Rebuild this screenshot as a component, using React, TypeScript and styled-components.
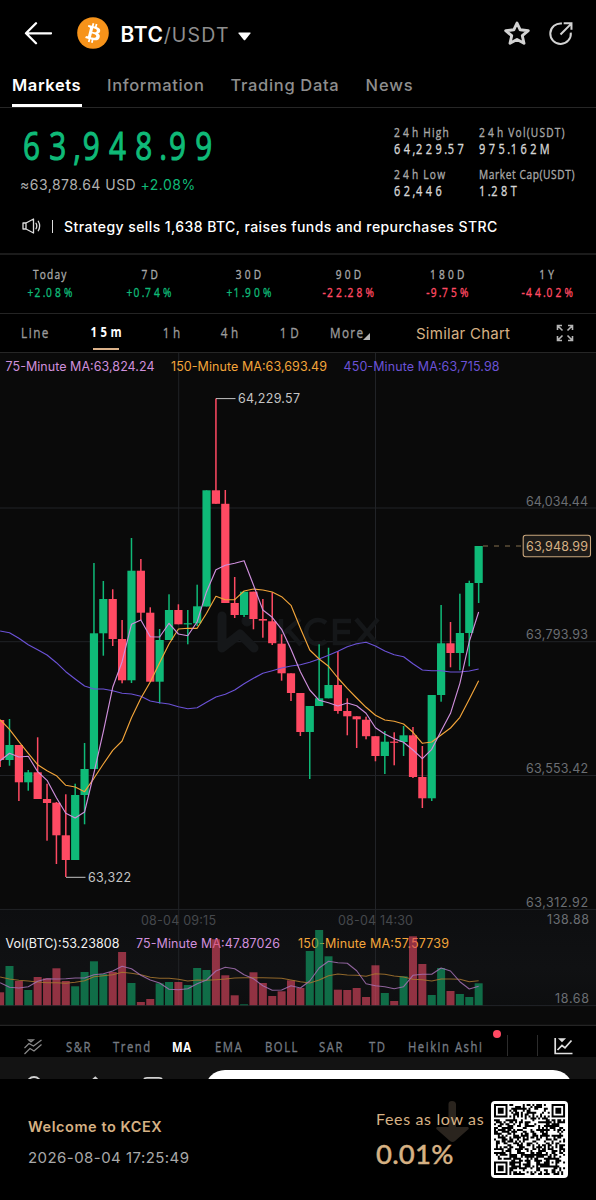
import React from 'react';
import styled, { createGlobalStyle } from 'styled-components';

const SANS = `Inter, "Noto Sans", sans-serif`;
const NARROW = `"Open Sans", "Noto Sans", sans-serif`;
const UP = '#0fba78';
const DOWN = '#ff4a63';
const GOLD = '#d6b184';
const PINK = '#cf8fdc';
const ORANGE = '#f3a53a';
const VIOLET = '#6b52d6';

const Global = createGlobalStyle`
  * { box-sizing: border-box; }
  body { margin: 0; background: #000; }
`;

const Screen = styled.div`
  width: 596px;
  height: 1200px;
  display: flex;
  flex-direction: column;
  background: #000;
  color: #fff;
  font-family: ${SANS};
  overflow: hidden;
  white-space: nowrap;
`;

/* ---------- condensed figures ---------- */

type NarrowProps = { $size: number; $color?: string; $bold?: boolean; $track?: number; $center?: boolean };
const Narrow = styled.span<NarrowProps>`
  display: block;
  font-family: ${NARROW};
  font-size: ${(p) => p.$size}px;
  line-height: 1.15;
  color: ${(p) => p.$color ?? '#a8a8a8'};
  font-weight: ${(p) => (p.$bold ? 700 : 400)};
  letter-spacing: ${(p) => p.$track ?? 0.12}em;
  -webkit-text-stroke: ${(p) => (p.$bold ? '0' : p.$size > 30 ? '1.1px' : '0.35px')};
  transform: scaleX(0.78);
  transform-origin: ${(p) => (p.$center ? '50%' : '0')} 50%;
`;
const Digits = styled.span`
  letter-spacing: 0.316em;
`;
const Mark = styled.span`
  letter-spacing: 0.06em;
  margin-left: -0.08em;
`;

type CondensedProps = { children: string; size: number; color?: string; bold?: boolean; track?: number; center?: boolean };
const Condensed = ({ children, size, color, bold, track, center }: CondensedProps) => (
  <Narrow $size={size} $color={color} $bold={bold} $track={track} $center={center}>
    {children.split(/(\d+|[.,])/).map((part, i) => {
      if (/^\d/.test(part)) return <Digits key={i}>{part}</Digits>;
      if (/^[.,]$/.test(part)) return <Mark key={i}>{part}</Mark>;
      return part;
    })}
  </Narrow>
);

/* ---------- header ---------- */

const Header = styled.header`
  height: 66px;
  flex: none;
  display: flex;
  align-items: center;
  padding: 0 23px 0 24px;
`;
const Coin = styled.svg`
  margin-left: 25px;
`;
const Pair = styled.h1`
  margin: 3px 0 0 11.5px;
  font-size: 21px;
  line-height: 26px;
  font-weight: 600;
  letter-spacing: 0.6px;
  span {
    color: #8e8e8e;
    font-size: 19.5px;
    font-weight: 400;
    letter-spacing: 1.2px;
  }
`;
const Caret = styled.svg`
  margin: 7px 0 0 8px;
`;
const HeaderActions = styled.div`
  margin-left: auto;
  display: flex;
  align-items: center;
  gap: 17px;
`;

const Tabs = styled.nav`
  height: 42px;
  flex: none;
  display: flex;
  gap: 25.5px;
  padding: 0 12px;
  border-bottom: 1px solid #262626;
`;
const Tab = styled.a<{ $active?: boolean; $width: number; $track: number }>`
  width: ${(p) => p.$width}px;
  height: 41px;
  line-height: 38px;
  font-size: 16.5px;
  letter-spacing: ${(p) => p.$track}px;
  font-weight: ${(p) => (p.$active ? 600 : 500)};
  color: ${(p) => (p.$active ? '#fff' : '#8e8e8e')};
  border-bottom: ${(p) => (p.$active ? '3px solid #fff' : 'none')};
`;

/* ---------- price summary ---------- */

const Summary = styled.section`
  height: 98px;
  flex: none;
  display: flex;
  padding: 0 16px 0 20px;
`;
const PriceBlock = styled.div`
  width: 374px;
  flex: none;
  padding-top: 16px;
  display: flex;
  flex-direction: column;
`;
const PriceValue = styled.div`
  padding-left: 3px;
  height: 49px;
`;
const Converted = styled.div`
  height: 22px;
  line-height: 22px;
  margin-top: 1px;
  font-size: 14px;
  letter-spacing: 0.47px;
  color: #b0b0b0;
  span {
    color: ${UP};
  }
`;
const Stats = styled.div`
  flex: none;
  padding-top: 17px;
  display: grid;
  grid-template-columns: 85px 101px;
  grid-auto-rows: 42px;
`;
const Stat = styled.div`
  display: flex;
  flex-direction: column;
  gap: 1px;
`;
const Notice = styled.div`
  height: 49px;
  flex: none;
  display: flex;
  align-items: center;
  padding: 0 22px 7px;
  font-size: 14px;
  font-weight: 500;
  letter-spacing: 0.42px;
  border-bottom: 2px solid #1b1b1b;
`;
const NoticeBar = styled.i`
  width: 1px;
  height: 13px;
  margin: 0 11px 0 11px;
  background: #ddd;
`;

const Performance = styled.section`
  height: 59px;
  flex: none;
  display: grid;
  grid-template-columns: repeat(6, 1fr);
  border-bottom: 1px solid #242424;
`;
const Period = styled.div`
  display: flex;
  flex-direction: column;
  align-items: center;
  padding-top: 12px;
  gap: 3px;
  padding-left: 2px;
`;

const Intervals = styled.nav`
  height: 39px;
  flex: none;
  display: grid;
  grid-template-columns: 71px 70px 63px 53px 66px 93px 94px 1fr;
  border-bottom: 1px solid #262626;
`;
const Interval = styled.a`
  display: flex;
  flex-direction: column;
  align-items: center;
  padding-top: 10px;
`;
const ActiveInterval = styled(Interval)`
  &::after {
    content: '';
    width: 26px;
    height: 2px;
    margin-top: 7px;
    background: #dbb28a;
  }
`;
const More = styled.a`
  display: flex;
  align-items: flex-start;
  padding: 10px 0 0 7px;
  svg {
    margin: 9px 0 0 -11px;
  }
`;
const Similar = styled.a`
  padding-top: 10px;
  line-height: 20px;
  font-size: 15px;
  letter-spacing: 0.25px;
  color: ${GOLD};
`;
const Expand = styled.a`
  padding: 10px 0 0 46px;
`;

/* ---------- chart ---------- */

const Chart = styled.svg`
  display: block;
  flex: none;
  font-family: ${SANS};
  font-size: 12.5px;
`;

type Candle = [up: 0 | 1, top: number, bottom: number, high: number, low: number];
const candles: Candle[] = [
  [0, 720, 760, 720, 767], [1, 745, 760, 719, 765.7], [0, 745, 782.3, 745, 801], [1, 772.3, 782.3, 770, 790.7],
  [0, 772.3, 799, 737.3, 799], [0, 799, 803, 783.7, 840.7], [0, 802.7, 835.3, 802, 864], [0, 835.3, 860, 794.3, 877],
  [1, 795, 860, 783.7, 860], [1, 769, 795, 743, 824.3], [1, 633.3, 769, 563, 769], [1, 599, 633.3, 581, 655.7],
  [0, 599, 639, 589.3, 646], [0, 639, 680.3, 620, 683.3], [1, 570.7, 680.3, 538, 683], [0, 570.7, 612.7, 559, 620],
  [0, 612.7, 681.7, 607.3, 681.7], [1, 640, 681.7, 629, 703.5], [1, 610, 640, 594.3, 640], [0, 610, 624.3, 604.3, 624.3],
  [1, 623.2, 624.4, 610, 644.3], [1, 606.3, 623.3, 584.7, 626], [1, 490.3, 606.5, 490.3, 606.5], [0, 490.3, 503.8, 398.5, 503.8],
  [0, 503.8, 603, 490, 603], [0, 603, 615, 577, 618], [1, 591.7, 615, 591.7, 617], [0, 591.7, 619, 591.7, 629.3],
  [0, 619, 620.6, 599, 637.7], [0, 621.3, 643.2, 592.3, 645], [0, 643.7, 673.3, 634.3, 680.7], [0, 673.3, 693, 673.3, 701],
  [0, 693, 732, 693, 736], [1, 706, 732, 706, 779], [1, 698.3, 706, 644.3, 706], [1, 685, 698.3, 647.7, 698.3],
  [0, 685, 711, 651, 713.7], [0, 711, 716.3, 698.3, 735.3], [0, 716.3, 719.3, 716.3, 748], [0, 719.7, 736.2, 716.7, 739.3],
  [0, 736.2, 756, 736, 761.3], [1, 741.7, 756, 731, 774], [0, 741.6, 742.8, 732.3, 765.3], [1, 735.3, 742, 726, 756],
  [0, 735.3, 777, 727, 778], [0, 777, 798.3, 746, 808], [1, 695, 798.3, 695, 801], [1, 643.3, 695, 605, 701.7],
  [0, 643.3, 653, 622, 667.3], [1, 633, 653, 593.7, 670.3], [1, 583, 633, 580.7, 666.3], [1, 546, 583, 546, 603],
];

const fastMa = [
  760.7, 753.3, 757, 756.3, 771.7, 780.3, 797.7, 813.3, 818, 812, 773, 731.7, 687.3, 661.7, 624.3, 620, 636.7, 637, 623.3,
  634, 635.7, 621.7, 591.7, 569.7, 565.3, 563.3, 560.7, 585, 610, 617.3, 629.3, 649.3, 671.7, 690, 700.3, 702.7, 706, 703,
  705.7, 713.3, 727.7, 734, 738.7, 742.3, 750, 758.7, 749.3, 731, 713.3, 683.3, 641.7, 612,
];
const midMa = [
  719.7, 729.3, 741.7, 753.3, 764.7, 770.7, 775.7, 785.3, 787, 791.7, 778.3, 764, 750.3, 741, 717.7, 698.3, 682, 662.7, 644,
  629, 628.3, 628.3, 613.3, 596.3, 599.7, 599.7, 591, 589, 590, 592, 596.7, 605.3, 628.3, 650, 659, 666.3, 678, 688.3, 698,
  707.3, 715.3, 720, 721.3, 724, 732.3, 743.3, 742, 735, 728, 717.3, 699.3, 680.7,
];
const slowMa = [
  631, 632.7, 638.3, 644.7, 649.7, 655, 662.7, 671.7, 679, 686, 689, 689, 690.7, 693.3, 694, 696.3, 701, 702.7, 704, 706.7,
  708.7, 707.7, 702.3, 697, 694.3, 690, 683.7, 678.3, 673.3, 670.7, 668, 666, 664.7, 662.3, 659, 655.3, 651.3, 646.7, 643.7,
  642.3, 646, 651, 654.7, 656.7, 663.7, 670, 670.7, 670.7, 672, 672, 671, 669,
];
const volumeTops = [
  992.3, 966, 981, 990, 977, 978.3, 968.3, 981, 986.3, 972, 961.3, 974, 972, 952, 983, 1002, 999, 983.3, 982, 982, 985, 968,
  970, 939.3, 975.3, 995.3, 1004.3, 972.3, 983, 996, 991.3, 980.3, 988, 951, 930, 956.3, 989.7, 990, 988, 997, 965.3, 993,
  1001, 976.3, 936.3, 964, 995, 968, 991, 994, 997, 983.3,
];
/* whether each volume bar is drawn in the rising colour */
const volumeUp = [
  0, 1, 0, 1, 0, 0, 0, 0, 1, 1, 1, 1, 0, 0, 1, 0, 0, 1, 1, 0, 1, 1, 1, 0, 0, 0, 1, 0, 0, 0, 0, 0, 0, 1, 1, 1, 0, 0, 0, 0, 0,
  1, 0, 1, 0, 0, 1, 1, 0, 1, 1, 1,
];
const volumeFast = [
  982.7, 987.3, 988, 986.7, 981.3, 978.7, 979, 978.7, 978, 978, 974.7, 973.7, 971, 966.3, 968.7, 975.3, 980, 983, 989.3,
  989.7, 988.7, 983.7, 980, 971, 967.3, 968.7, 974.7, 978.7, 985.7, 990.3, 990, 985.7, 988, 981, 968, 961.3, 962.7, 963.3,
  970.7, 983.7, 985.7, 986.7, 988.7, 986.7, 975.3, 974.3, 974.3, 968, 971, 981.7, 989, 986.3,
];
const volumeMid = [
  977, 979, 980.3, 981, 982, 982.7, 982.7, 983.3, 982.3, 980.7, 976.7, 975.7, 974.7, 972.3, 973.3, 974.7, 977.3, 978.3,
  978.3, 979.3, 981, 980, 980.3, 979.7, 979, 978, 977.7, 977.7, 977.7, 978, 978.3, 980, 981.7, 983, 980, 975.7, 974, 975,
  975.3, 976.3, 973.7, 974.3, 976, 977, 979.3, 979.7, 981, 979, 979, 979.3, 981.7, 980.7,
];

const cx = (i: number) => 0.12 + i * 9.383;
const line = (values: number[]) => values.map((y, i) => `${cx(i).toFixed(2)},${y}`).join(' ');

const ChartText = ({ x, y, w, fill, children }: { x: number; y: number; w: number; fill: string; children: string }) => (
  <text x={x} y={y} fill={fill} textLength={w}>
    {children}
  </text>
);

const PriceChart = () => (
  <Chart width="596" height="673" viewBox="0 353 596 673">
    <defs>
      <linearGradient id="volumeShade" x1="0" y1="0" x2="0" y2="1">
        <stop offset="0" stopColor="#0d0e10" />
        <stop offset="0.6" stopColor="#101113" />
        <stop offset="1" stopColor="#0d0e0f" />
      </linearGradient>
    </defs>
    <rect y="353" width="596" height="673" fill="#0a0a0a" />
    <rect y="909" width="596" height="97" fill="url(#volumeShade)" />
    <path d="M0 508H596M0 641.7H596M0 775.5H596M0 909.4H596M0 1005.6H596M178.7 353V1005M375.5 353V1005" stroke="#212327" fill="none" />
    <path d="M0 1025.3H596" stroke="#2b2b2b" />

    <g fill="#151719" stroke="#151719">
      <path d="M222 616V648L240 634L254 648" fill="none" strokeWidth="9" strokeLinecap="round" strokeLinejoin="round" />
      <circle cx="247" cy="621" r="5" />
      <g fill="none" strokeWidth="4.5">
        <path d="M281 619V645M300 619L283 634M288 630L301 645" />
        <path d="M326 623A12 12 0 1 0 326 641" />
        <path d="M351 621H335V643H351M335 632H350" />
        <path d="M356 619L378 645M378 619L356 645" />
      </g>
    </g>

    <ChartText x={5.5} y={370.5} w={149} fill={PINK}>75-Minute MA:63,824.24</ChartText>
    <ChartText x={171} y={370.5} w={156} fill={ORANGE}>150-Minute MA:63,693.49</ChartText>
    <ChartText x={343.5} y={370.5} w={156} fill={VIOLET}>450-Minute MA:63,715.98</ChartText>

    {candles.map(([up, top, bottom, high, low], i) => (
      <g key={i} fill={up ? UP : DOWN}>
        <rect x={cx(i) - 0.75} y={high} width="1.5" height={low - high} />
        <rect x={cx(i) - 4.1} y={top} width="8.2" height={bottom - top} />
      </g>
    ))}
    <g fill="none" strokeWidth="1.15" strokeLinejoin="round">
      <polyline points={line(slowMa)} stroke={VIOLET} />
      <polyline points={line(midMa)} stroke={ORANGE} />
      <polyline points={line(fastMa)} stroke={PINK} />
    </g>

    <path d="M216 398.6H235.5M66 877.3H85.5" stroke="#c4c4c4" />
    <ChartText x={238} y={403.3} w={62} fill="#c4c4c4">64,229.57</ChartText>
    <ChartText x={88} y={882} w={43} fill="#c4c4c4">63,322</ChartText>

    <g>
      <ChartText x={526} y={505.6} w={62} fill="#6b6e73">64,034.44</ChartText>
      <ChartText x={526} y={639.4} w={62} fill="#6b6e73">63,793.93</ChartText>
      <ChartText x={526} y={773.4} w={62} fill="#6b6e73">63,553.42</ChartText>
      <ChartText x={526} y={906.5} w={62} fill="#6b6e73">63,312.92</ChartText>
      <ChartText x={547} y={923.6} w={42} fill="#6b6e73">138.88</ChartText>
      <ChartText x={555} y={1002.5} w={34} fill="#6b6e73">18.68</ChartText>
      <ChartText x={141} y={924.8} w={75} fill="#45484c">08-04 09:15</ChartText>
      <ChartText x={338} y={924.8} w={75} fill="#45484c">08-04 14:30</ChartText>
    </g>

    <path d="M483 546H522" stroke="#85704f" strokeDasharray="5 6" />
    <rect x="523.2" y="535.2" width="67.3" height="21.6" rx="2.5" fill="#1d1b19" stroke="#c9a67c" strokeWidth="1.1" />
    <ChartText x={526} y={550.7} w={62} fill={GOLD}>63,948.99</ChartText>

    <ChartText x={5.5} y={948} w={114} fill="#f2f2f2">Vol(BTC):53.23808</ChartText>
    <ChartText x={136} y={948} w={144} fill={PINK}>75-Minute MA:47.87026</ChartText>
    <ChartText x={298} y={948} w={151} fill={ORANGE}>150-Minute MA:57.57739</ChartText>

    {volumeTops.map((top, i) => (
      <rect key={i} x={cx(i) - 4} y={top} width="8" height={1005.2 - top} fill={volumeUp[i] ? '#12a469' : '#e04760'} opacity="0.63" />
    ))}
    <g fill="none" strokeWidth="1.1" strokeLinejoin="round">
      <polyline points={line(volumeMid)} stroke="#a8772f" opacity="0.85" />
      <polyline points={line(volumeFast)} stroke="#a571b4" opacity="0.85" />
    </g>
  </Chart>
);

/* ---------- indicators ---------- */

const Indicators = styled.nav`
  position: relative;
  height: 31px;
  flex: none;
  display: flex;
  padding: 12px 0 0 24px;
`;
const Indicator = styled.a<{ $width: number }>`
  width: ${(p) => p.$width}px;
  height: 19px;
  margin-right: 22.5px;
  padding-top: 1px;
`;
const TrendIcon = styled.svg`
  margin: 1px 23.5px 0 0;
`;
const Dot = styled.i`
  position: absolute;
  left: 493px;
  top: 4px;
  width: 8px;
  height: 8px;
  border-radius: 50%;
  background: ${DOWN};
`;
const DrawTool = styled.a`
  width: 31px;
  height: 21px;
  margin: -3px 15.5px 0 0.5px;
  border: solid #2c2c2c;
  border-width: 0 1px;
`;

const BottomPeek = styled.div`
  height: 22px;
  flex: none;
  display: flex;
  overflow: hidden;
  background: #131313;
`;
const TradeButton = styled.div`
  width: 368px;
  height: 40px;
  margin: 13px 0 0 35px;
  border-radius: 20px;
  background: #fff;
`;

/* ---------- share footer ---------- */

const Footer = styled.footer`
  flex: 1;
  display: flex;
  padding: 0 28px;
`;
const Welcome = styled.div`
  width: 348px;
  padding-top: 38px;
  strong {
    display: block;
    font-size: 14.5px;
    line-height: 20px;
    font-weight: 600;
    letter-spacing: 0.55px;
    color: ${GOLD};
  }
  time {
    display: block;
    margin-top: 11px;
    font-size: 15px;
    line-height: 20px;
    letter-spacing: 0.45px;
    color: #a9a9a9;
  }
`;
const Fees = styled.div`
  position: relative;
  width: 115px;
  padding-top: 30px;
  font-family: Lato, sans-serif;
  color: ${GOLD};
  span {
    position: relative;
    display: block;
    font-size: 16px;
    line-height: 20px;
    letter-spacing: 0.65px;
  }
  b {
    display: block;
    margin-top: 9px;
    font-size: 27.5px;
    line-height: 32px;
    font-weight: 500;
    letter-spacing: 0.2px;
    -webkit-text-stroke: 0.4px ${GOLD};
  }
`;
const FeeArrow = styled.svg`
  position: absolute;
  left: 60px;
  top: 22px;
`;
const QrBox = styled.svg`
  margin-top: 22px;
`;

const QR_SIZE = 37;
const qrCells = (() => {
  let seed = 90210;
  const next = () => {
    seed = (seed * 1103515245 + 12345) % 2147483648;
    return seed / 2147483648;
  };
  const ring = (x: number, y: number, c: number) => Math.max(Math.abs(x - c), Math.abs(y - c));
  let d = '';
  for (let y = 0; y < QR_SIZE; y++) {
    for (let x = 0; x < QR_SIZE; x++) {
      const fx = x > QR_SIZE / 2 ? x - (QR_SIZE - 7) : x;
      const fy = y > QR_SIZE / 2 ? y - (QR_SIZE - 7) : y;
      const finder = !(x > 20 && y > 20) && ring(fx, fy, 3) <= 4;
      const mark = ring(x, y, QR_SIZE - 7);
      let on = next() > 0.48;
      if (finder) on = ring(fx, fy, 3) !== 2 && ring(fx, fy, 3) !== 4;
      else if (mark <= 2) on = mark !== 1;
      else if (x === 6 || y === 6) on = (x + y) % 2 === 0;
      if (on) d += `M${x} ${y}h1.03v1.03h-1.03z`;
    }
  }
  return d;
})();

const intervalColor = '#9b9b9b';
const indicatorColor = '#757b83';

export default function App() {
  return (
    <Screen>
      <Global />
      <Header>
        <svg width="28" height="24" viewBox="0 0 28 24" fill="none" stroke="#fff" strokeWidth="2.3" strokeLinecap="round" strokeLinejoin="round">
          <path d="M27 12.3H2M12 2.3L2 12.3L12 22.2" />
        </svg>
        <Coin width="32" height="32" viewBox="0 0 32 32">
          <circle cx="16" cy="16" r="15.8" fill="#f7931a" />
          <path
            fill="#fff"
            fillRule="evenodd"
            d="M23.19 14.02c.31-2.1-1.28-3.22-3.47-3.97l.71-2.84-1.73-.43-.69 2.77-1.39-.33.7-2.78-1.73-.43-.71 2.84-1.1-.26-2.39-.6-.46 1.85s1.28.3 1.26.32c.7.17.83.63.8 1l-.81 3.23.18.06-.18-.05-1.13 4.53c-.09.21-.31.53-.79.41-.02.03-1.26-.31-1.26-.31l-.86 1.98 3.47.87-.72 2.87 1.73.43.71-2.84 1.38.36-.7 2.83 1.72.43.72-2.87c2.95.56 5.17.33 6.1-2.33.75-2.15-.04-3.39-1.59-4.19 1.13-.26 1.98-1 2.21-2.55zm-3.95 5.54c-.53 2.15-4.15.99-5.32.7l.95-3.81c1.17.29 4.93.87 4.37 3.11zm.54-5.57c-.49 1.96-3.5.96-4.47.72l.86-3.45c.98.24 4.12.69 3.61 2.73z"
          />
        </Coin>
        <Pair>
          BTC<span>/USDT</span>
        </Pair>
        <Caret width="13" height="9" viewBox="0 0 13 9">
          <path d="M1 .5H12Q13 .5 12.4 1.4L7.4 7.8Q6.5 8.8 5.6 7.8L.6 1.4Q0 .5 1 .5Z" fill="#fff" />
        </Caret>
        <HeaderActions>
          <svg width="28" height="26" viewBox="0 0 28 26" fill="none" stroke="#d2d2d2" strokeWidth="2.9" strokeLinejoin="round">
            <path d="M14 3L17.2 9.8L25.3 10.7L19.3 15.7L21 23.3L14 19.5L7 23.3L8.7 15.7L2.7 10.7L10.8 9.8Z" />
          </svg>
          <svg width="25" height="25" viewBox="0 0 26 26" fill="none" stroke="#d2d2d2" strokeWidth="2.1">
            <path d="M14.5 2.6A10.7 10.7 0 1 0 23.7 12M13 14L24 3M16.3 2.4H24.4V9.2" />
          </svg>
        </HeaderActions>
      </Header>

      <Tabs>
        <Tab $active $width={69.5} $track={0.6}>Markets</Tab>
        <Tab $width={98} $track={0.64}>Information</Tab>
        <Tab $width={109.5} $track={0.68}>Trading Data</Tab>
        <Tab $width={50} $track={0.9}>News</Tab>
      </Tabs>

      <Summary>
        <PriceBlock>
          <PriceValue>
            <Condensed size={38} color={UP}>63,948.99</Condensed>
          </PriceValue>
          <Converted>
            ≈63,878.64 USD <span>+2.08%</span>
          </Converted>
        </PriceBlock>
        <Stats>
          <Stat>
            <Condensed size={13}>24h High</Condensed>
            <Condensed size={14} color="#d6d6d6">64,229.57</Condensed>
          </Stat>
          <Stat>
            <Condensed size={13}>24h Vol(USDT)</Condensed>
            <Condensed size={14} color="#d6d6d6">975.162M</Condensed>
          </Stat>
          <Stat>
            <Condensed size={13}>24h Low</Condensed>
            <Condensed size={14} color="#d6d6d6">62,446</Condensed>
          </Stat>
          <Stat>
            <Condensed size={13} track={0.06}>Market Cap(USDT)</Condensed>
            <Condensed size={14} color="#d6d6d6">1.28T</Condensed>
          </Stat>
        </Stats>
      </Summary>

      <Notice>
        <svg width="19" height="16" viewBox="0 0 19 16" fill="none" stroke="#ddd" strokeWidth="1.3" strokeLinejoin="round" strokeLinecap="round">
          <path d="M1 5H4L11.5 1V15L4 11H1ZM4 5V11M14 5.2Q15.6 8 14 10.8M16.3 3.3Q19 8 16.3 12.7" />
        </svg>
        <NoticeBar />
        Strategy sells 1,638 BTC, raises funds and repurchases STRC
      </Notice>

      <Performance>
        {[
          ['Today', '+2.08%'],
          ['7D', '+0.74%'],
          ['30D', '+1.90%'],
          ['90D', '-22.28%'],
          ['180D', '-9.75%'],
          ['1Y', '-44.02%'],
        ].map(([label, change]) => (
          <Period key={label}>
            <Condensed center size={13}>{label}</Condensed>
            <Condensed center size={13} color={change[0] === '+' ? UP : DOWN}>{change}</Condensed>
          </Period>
        ))}
      </Performance>

      <Intervals>
        <Interval><Condensed center size={15} color={intervalColor} track={0.13}>Line</Condensed></Interval>
        <ActiveInterval><Condensed center size={14.5} color="#fff" bold track={0.04}>15m</Condensed></ActiveInterval>
        <Interval><Condensed center size={15} color={intervalColor}>1h</Condensed></Interval>
        <Interval><Condensed center size={15} color={intervalColor}>4h</Condensed></Interval>
        <Interval><Condensed center size={15} color={intervalColor}>1D</Condensed></Interval>
        <More>
          <Condensed size={15} color={intervalColor}>More</Condensed>
          <svg width="7" height="7" viewBox="0 0 7 7"><path d="M7 0V7H0Z" fill="#b5b5b5" /></svg>
        </More>
        <Similar>Similar Chart</Similar>
        <Expand>
          <svg width="18" height="18" viewBox="0 0 18 18" fill="none" stroke="#b5b5b5" strokeWidth="1.6">
            <path d="M1.5 6V1.5H6M2 2L6.5 6.5M12 1.5H16.5V6M16 2L11.5 6.5M1.5 12V16.5H6M2 16L6.5 11.5M12 16.5H16.5V12M16 16L11.5 11.5" />
          </svg>
        </Expand>
      </Intervals>

      <PriceChart />

      <Indicators>
        <TrendIcon width="18" height="16" viewBox="0 0 18 16" fill="none" stroke="#8a8a8a" strokeWidth="1.2">
          <path d="M.5 9L5 4.5L9.5 7L17.5 1M.5 15L6 9.5L10 12L17.5 5.5M4.5 .8H9.5L7 3Z" />
        </TrendIcon>
        {(
          [
            ['S&R', 24.5], ['Trend', 37], ['MA', 20], ['EMA', 28], ['BOLL', 31], ['SAR', 27.5], ['TD', 17], ['Heikin Ashi', 76],
          ] as [string, number][]
        ).map(([name, width]) => (
          <Indicator key={name} $width={width}>
            <Condensed size={14.5} color={name === 'MA' ? '#fff' : indicatorColor} bold={name === 'MA'} track={name === 'MA' ? 0.06 : 0.135}>
              {name}
            </Condensed>
          </Indicator>
        ))}
        <Dot />
        <DrawTool />
        <svg width="19" height="17" viewBox="0 0 19 17" fill="none" stroke="#e0e0e0" strokeWidth="1.7">
          <path d="M1.2 0V15.5H18.5M3.5 12L8 7.5L11 9.8L17.5 2.5M6 1H10L8 3Z" />
        </svg>
      </Indicators>

      <BottomPeek>
        <svg width="170" height="22" viewBox="0 1057 170 22" fill="none" stroke="#d0d0d0" strokeWidth="1.8">
          <circle cx="34" cy="1084" r="7" />
          <path d="M88 1084L95.3 1077.5L102 1084M144 1084V1080Q144 1077.8 147 1077.8H159Q162 1077.8 162 1080V1084" />
        </svg>
        <TradeButton />
      </BottomPeek>

      <Footer>
        <Welcome>
          <strong>Welcome to KCEX</strong>
          <time>2026-08-04 17:25:49</time>
        </Welcome>
        <Fees>
          <FeeArrow width="33" height="42" viewBox="0 0 33 42" fill="#2a241e">
            <path d="M12.5 3Q12.5 0 16 0T20 3V26H32Q33.5 27 32 28.5L19 40Q16.5 42 14 40L1 28.5Q-.5 27 1 26H12.5Z" />
          </FeeArrow>
          <span>Fees as low as</span>
          <b>0.01%</b>
        </Fees>
        <QrBox width="77" height="77" viewBox="0 0 77 77">
          <rect width="77" height="77" rx="4" fill="#fff" />
          <path transform="translate(3 3) scale(1.919)" d={qrCells} fill="#000" />
        </QrBox>
      </Footer>
    </Screen>
  );
}
